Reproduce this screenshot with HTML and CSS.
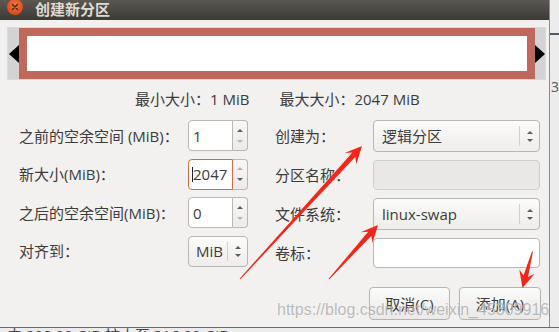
FILE: index.html
```html
<!DOCTYPE html>
<html lang="zh-CN">
<head>
<meta charset="utf-8">
<title>创建新分区</title>
<link rel="stylesheet" href="styles.css">
</head>
<body>
<div class="screen">
  <div class="dialog">
    <div class="titlebar">
      <span class="close"><svg width="16" height="16" viewBox="0 0 16 16"><path d="M5.5 5.5 L10.5 10.5 M10.5 5.5 L5.5 10.5" stroke="#4a2413" stroke-width="1.4" stroke-linecap="round"/></svg></span>
      <span class="title">创建新分区</span>
    </div>
    <div class="partbar">
      <div class="pb-side left"><i class="tri-l"></i></div>
      <div class="part"></div>
      <div class="pb-side right"><i class="tri-r"></i></div>
    </div>
    <div class="sizes"><span>最小大小：1 MiB</span><span>最大大小：2047 MiB</span></div>
    <div class="form">
      <div class="lcol">
        <span class="lbl">之前的空余空间 (MiB)：</span>
        <div class="spin"><span class="spin-entry">1</span><span class="spin-btns"><i class="up"></i><i class="down dis"></i></span></div>
        <span class="lbl">新大小(MiB)：</span>
        <div class="spin"><span class="spin-entry focus"><b class="caret"></b>2047</span><span class="spin-btns"><i class="up dis"></i><i class="down"></i></span></div>
        <span class="lbl">之后的空余空间(MiB)：</span>
        <div class="spin"><span class="spin-entry">0</span><span class="spin-btns"><i class="up"></i><i class="down dis"></i></span></div>
        <span class="lbl">对齐到：</span>
        <div class="combo small"><span class="val">MiB</span><span class="sep"></span><span class="arr"><i class="up"></i><i class="down"></i></span></div>
      </div>
      <div class="rcol">
        <span class="lbl">创建为：</span>
        <div class="combo"><span class="val">逻辑分区</span><span class="sep"></span><span class="arr"><i class="up"></i><i class="down"></i></span></div>
        <span class="lbl">分区名称：</span>
        <div class="entry disabled"></div>
        <span class="lbl">文件系统：</span>
        <div class="combo"><span class="val">linux-swap</span><span class="sep"></span><span class="arr"><i class="up"></i><i class="down"></i></span></div>
        <span class="lbl">卷标：</span>
        <div class="entry"></div>
      </div>
    </div>
    <div class="buttons">
      <span class="btn">取消(C)</span>
      <span class="btn wide">添加(A)</span>
    </div>
  </div>
  <div class="side-strip"><span class="blue"></span><span class="glyph">3</span></div>
</div>
<div class="bottom-strip">由 298.00 GiB 扩大至 316.00 GiB</div>
<svg class="arrows" width="559" height="332" viewBox="0 0 559 332">
  <polygon fill="#f3261b" points="362,146 356.4,163.9 355.2,157 240.4,279.3 239.6,278.7 352.4,152.6 344.6,153.1"/>
  <polygon fill="#f3261b" points="378,225 372.5,243 371.4,235.8 329.4,279.3 328.6,278.7 368.2,231.8 360.7,232.2"/>
  <polygon fill="#f3261b" points="522.5,288 519.3,269.5 523.5,275.5 532,251.4 533,251.6 528,277 534.7,273.7"/>
</svg>
<div class="watermark">https://blog.csdn.net/weixin_45309916</div>
</body>
</html>
```
FILE: styles.css
```css
* { box-sizing: border-box; }
html, body { margin: 0; padding: 0; }
body {
  width: 559px;
  height: 332px;
  overflow: hidden;
  position: relative;
  background: #e6e6e6;
  font-family: "Open Sans", "Noto Sans CJK SC", sans-serif;
  font-size: 15px;
  color: #3c3c3c;
}
.screen { display: flex; height: 327px; }
.dialog {
  width: 553px;
  height: 327px;
  background: #f2f1f0;
  display: flex;
  flex-direction: column;
}
.titlebar {
  height: 20px;
  flex: none;
  background: linear-gradient(#5b5851, #3c3a35);
  display: flex;
  align-items: flex-start;
  padding-left: 7px;
  gap: 12px;
}
.close {
  width: 16px;
  height: 16px;
  margin-top: -1px;
  border-radius: 50%;
  background: radial-gradient(circle at 50% 40%, #f57a45, #e0501f 60%, #b8401a);
  display: flex;
}
.title {
  color: #dfdbd2;
  font-weight: bold;
  font-size: 15px;
  line-height: 17px;
  font-family: "Noto Sans CJK SC", sans-serif;
}
.partbar {
  margin: 7px 0 0 7px;
  width: 539px;
  height: 53px;
  border: 1px solid #dcdad6;
  display: flex;
  flex: none;
}
.pb-side {
  width: 11px;
  background: #d3d3d3;
  display: flex;
  align-items: center;
  justify-content: flex-end;
}
.pb-side.right { width: 10px; justify-content: flex-start; }
.tri-l {
  width: 0; height: 0;
  border-top: 9.5px solid transparent;
  border-bottom: 9.5px solid transparent;
  border-right: 10px solid #000;
}
.tri-r {
  width: 0; height: 0;
  border-top: 9.5px solid transparent;
  border-bottom: 9.5px solid transparent;
  border-left: 10px solid #000;
}
.part {
  flex: 1;
  border: 8px solid #c1685c;
  background: #fff;
}
.sizes {
  display: flex;
  gap: 30px;
  margin-top: 10px;
  line-height: 18px;
  padding-left: 135px;
}
.form {
  display: flex;
  margin-top: 12px;
  padding-left: 19px;
  gap: 27px;
}
.lbl { line-height: 18px; white-space: nowrap; }
.lcol {
  display: grid;
  grid-template-columns: 169px 60px;
  grid-auto-rows: 31px;
  row-gap: 7.5px;
  align-items: center;
}
.rcol {
  display: grid;
  grid-template-columns: 98px 167px;
  grid-template-rows: 32px 30px 32px 30px;
  row-gap: 8px;
  align-items: center;
}
.spin { display: flex; height: 31px; }
.spin-entry {
  width: 45px;
  background: #fff;
  border: 1px solid #b9b7b3;
  border-radius: 4px 0 0 4px;
  padding-left: 4px;
  display: flex;
  align-items: center;
  line-height: 18px;
}
.spin-entry.focus { border-color: #e2653f; padding-left: 3px; }
.caret { width: 1px; height: 15px; background: #222; }
.spin-btns {
  flex: 1;
  border: 1px solid #b9b7b3;
  border-left: none;
  border-radius: 0 4px 4px 0;
  background: linear-gradient(#f8f7f6, #ecebe9);
  display: flex;
  flex-direction: column;
  align-items: center;
  justify-content: center;
  gap: 8px;
}
.up, .down {
  display: block;
  width: 0; height: 0;
  border-left: 3px solid transparent;
  border-right: 3px solid transparent;
}
.up { border-bottom: 3px solid #5c5c5c; }
.down { border-top: 3px solid #5c5c5c; }
.up.dis { border-bottom-color: #b3b3b3; }
.down.dis { border-top-color: #b3b3b3; }
.combo {
  height: 100%;
  border: 1px solid #b9b7b3;
  border-radius: 4px;
  background: linear-gradient(#fbfbfa, #eeedeb);
  display: flex;
  align-items: center;
  padding-left: 8px;
  line-height: 18px;
}
.combo.small { height: 31px; padding-left: 7px; }
.combo .val { flex: 1; white-space: nowrap; }
.combo .sep {
  width: 1px;
  align-self: stretch;
  margin: 5px 0;
  background: #d2d0cc;
}
.combo .arr {
  width: 19px;
  display: flex;
  flex-direction: column;
  align-items: center;
  gap: 5px;
}
.entry {
  height: 100%;
  border: 1px solid #b9b7b3;
  border-radius: 4px;
  background: #fff;
}
.entry.disabled { background: #e9e8e6; border-color: #d0cecb; }
.buttons {
  display: flex;
  justify-content: flex-end;
  gap: 9px;
  padding-right: 8px;
  margin-top: 19px;
}
.btn {
  width: 81px;
  height: 33px;
  border: 1px solid #b6b4b0;
  border-radius: 4px;
  background: linear-gradient(#fbfbfa, #eae9e7);
  display: flex;
  align-items: center;
  justify-content: center;
  line-height: 18px;
}
.btn.wide { width: 82px; }
.side-strip {
  flex: 1;
  background: #ececec;
  border-left: 1px solid #8c8c8c;
  display: flex;
  flex-direction: column;
}
.side-strip .blue { height: 2px; margin-top: 33px; background: #4d5a6a; }
.side-strip .glyph { margin-top: 44px; font-size: 14px; line-height: 16px; color: #555; margin-left: 1px; }
.bottom-strip {
  height: 5px;
  overflow: hidden;
  background: #ececec;
  border-top: 1px solid #6a6a6a;
  padding-left: 7px;
  font-size: 15px;
  line-height: 15px;
  color: #444;
  white-space: nowrap;
}
.arrows { position: absolute; left: 0; top: 0; pointer-events: none; }
.watermark {
  position: absolute;
  left: 277px;
  top: 302px;
  font-family: "Liberation Sans", Arial, sans-serif;
  font-size: 16px;
  line-height: 16px;
  color: rgba(140, 140, 140, 0.6);
  text-shadow: 0 0 1px rgba(255, 255, 255, 0.8);
  white-space: nowrap;
  pointer-events: none;
}
```
